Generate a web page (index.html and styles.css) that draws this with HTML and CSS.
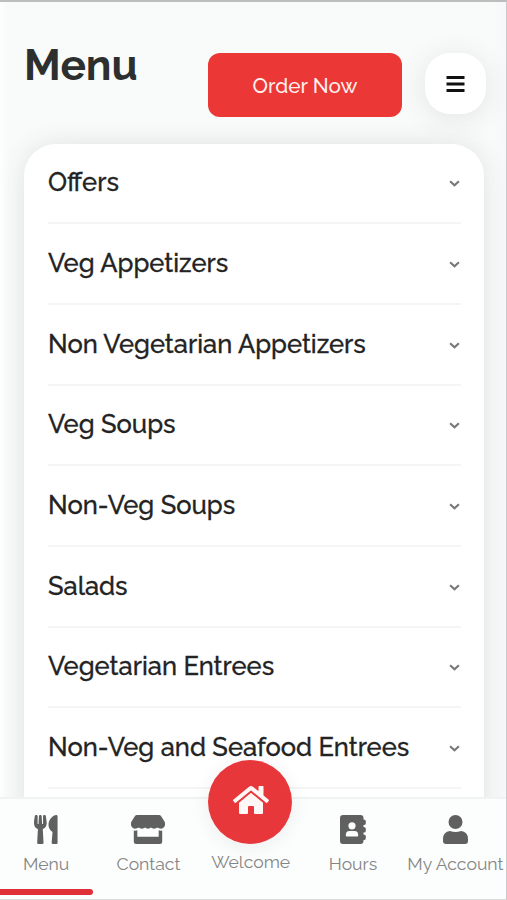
FILE: index.html
```html
<!DOCTYPE html>
<html lang="en">
<head>
<meta charset="utf-8">
<title>Menu</title>
<link rel="stylesheet" href="styles.css">
</head>
<body>
<div class="app">
  <header class="header">
    <h1 class="title">Menu</h1>
    <button class="order">Order Now</button>
    <button class="burger" aria-label="Open navigation"><svg viewBox="0 0 18 18"><path d="M0 2.5h18M0 9h18M0 15.5h18"/></svg></button>
  </header>
  <main class="card">
    <div class="row"><span class="name">Offers</span><svg class="chevron" viewBox="0 0 10 6"><path d="M1 1l4 3.7L9 1"/></svg></div>
    <div class="row"><span class="name">Veg Appetizers</span><svg class="chevron" viewBox="0 0 10 6"><path d="M1 1l4 3.7L9 1"/></svg></div>
    <div class="row"><span class="name">Non Vegetarian Appetizers</span><svg class="chevron" viewBox="0 0 10 6"><path d="M1 1l4 3.7L9 1"/></svg></div>
    <div class="row"><span class="name">Veg Soups</span><svg class="chevron" viewBox="0 0 10 6"><path d="M1 1l4 3.7L9 1"/></svg></div>
    <div class="row"><span class="name">Non-Veg Soups</span><svg class="chevron" viewBox="0 0 10 6"><path d="M1 1l4 3.7L9 1"/></svg></div>
    <div class="row"><span class="name">Salads</span><svg class="chevron" viewBox="0 0 10 6"><path d="M1 1l4 3.7L9 1"/></svg></div>
    <div class="row"><span class="name">Vegetarian Entrees</span><svg class="chevron" viewBox="0 0 10 6"><path d="M1 1l4 3.7L9 1"/></svg></div>
    <div class="row"><span class="name">Non-Veg and Seafood Entrees</span><svg class="chevron" viewBox="0 0 10 6"><path d="M1 1l4 3.7L9 1"/></svg></div>
  </main>
  <nav class="nav">
    <a class="tab active"><svg class="icon" viewBox="0 0 416 512"><path d="M207.9 15.2c.8 4.7 16.1 94.5 16.1 128.8 0 52.3-27.8 89.6-68.9 104.6L168 486.7c.7 13.7-10.2 25.3-24 25.3H80c-13.7 0-24.7-11.5-24-25.3l12.9-238.1C27.7 233.6 0 196.2 0 144 0 109.6 15.3 19.9 16.1 15.2 19.3-5.1 61.4-5.4 64 16.3v141.2c1.3 3.4 15.1 3.2 16 0 1.4-25.3 7.9-139.2 8-141.8 3.3-20.8 44.7-20.8 47.9 0 .2 2.7 6.6 116.5 8 141.8.9 3.2 14.8 3.4 16 0V16.3c2.6-21.6 44.8-21.4 48-1.1zm119.2 285.7l-15 185.1c-1.2 14 9.9 26 23.9 26h56c13.3 0 24-10.7 24-24V24c0-13.2-10.7-24-24-24-82.5 0-221.4 178.5-64.9 300.9z"/></svg><span class="label">Menu</span></a>
    <a class="tab"><svg class="icon" viewBox="0 0 34 29"><path d="M6 0h22q1.400 0 2.200 1.200l3.400 5.600c1.500 3-.2 6.700-3.400 6.900-1.700 0-2.800-.4-3.700-1.100-1.900 1.500-5 1.500-6.500 0-1.600 1.500-4.400 1.500-6 0-1.500 1.500-4.600 1.500-6.500 0-.9.700-2 1.100-3.700 1.100C.6 13.500-1.100 9.800.4 6.800l3.400-5.600Q4.600 0 6 0zM2.800 15.500q1.800.4 3.500-.2v6.400h21.400v-6.400q1.700.6 3.500.2v11q0 2.500-2.500 2.500H5.300q-2.500 0-2.500-2.500z"/></svg><span class="label">Contact</span></a>
    <a class="tab home"><span class="bubble"><svg viewBox="0 0 576 512"><path d="M280.370 148.260L96 300.110V464a16 16 0 0 0 16 16l112.060-.29a16 16 0 0 0 15.920-16V368a16 16 0 0 1 16-16h64a16 16 0 0 1 16 16v95.640a16 16 0 0 0 16 16.050L464 480a16 16 0 0 0 16-16V300L295.670 148.260a12.190 12.190 0 0 0-15.300 0zM571.600 251.470L488 182.560V44.050a12 12 0 0 0-12-12h-56a12 12 0 0 0-12 12v72.610L318.470 43a48 48 0 0 0-61 0L4.340 251.470a12 12 0 0 0-1.600 16.900l25.500 31A12 12 0 0 0 45.150 301l235.220-193.740a12.190 12.190 0 0 1 15.300 0L530.900 301a12 12 0 0 0 16.900-1.600l25.500-31a12 12 0 0 0-1.700-16.930z"/></svg></span><span class="label">Welcome</span></a>
    <a class="tab"><svg class="icon" viewBox="0 0 26 29"><path fill-rule="evenodd" d="M3 0h17.500q3 0 3 3v1.500q2.300 0 2.300 1.500v2.500q0 1.500-2.300 1.500v2q2.300 0 2.300 1.500V16q0 1.500-2.300 1.500v2q2.300 0 2.300 1.500v2.500q0 1.500-2.300 1.500v1q0 3-3 3H3q-3 0-3-3V3q0-3 3-3zm9 7.200a3.600 3.600 0 1 0 0 7.200 3.600 3.600 0 0 0 0-7.200zM9.500 16Q5.800 16 5.800 20v.5q0 1 1 1h10.400q1 0 1-1V20q0-4-3.700-4z"/></svg><span class="label">Hours</span></a>
    <a class="tab"><svg class="icon" viewBox="0 0 25 29"><circle cx="12.500" cy="7" r="7"/><path d="M7 16q5.500 2 11 0 7 .8 7 8v2q0 3-3 3H3q-3 0-3-3v-2q0-7.200 7-8z"/></svg><span class="label">My Account</span></a>
  </nav>
</div>
</body>
</html>
```
FILE: styles.css
```css
* { box-sizing: border-box; }
body { margin: 0; font-family: Raleway, Lato, sans-serif; }
button { border: 0; padding: 0; font-family: inherit; }

.app {
  position: relative;
  width: 507px;
  height: 900px;
  overflow: hidden;
  background: linear-gradient(90deg, #fdfefd 0, #f9fbfa 8px, #f9fbfa 490px, #f7f8f9 100%);
  border-top: 2px solid #bcbebd;
  border-right: 1px solid #c9cacc;
  border-bottom: 1px solid #dadada;
}

.header {
  display: flex;
  align-items: flex-start;
  height: 141.500px;
  padding: 51px 20px 0 24px;
}
.title {
  flex: 1;
  margin: -14px 0 0;
  font-size: 42.500px;
  line-height: 52px;
  font-weight: 700;
  color: #2d2f2f;
}
.order {
  width: 194px;
  height: 64px;
  margin-right: 23px;
  padding-top: 1px;
  border-radius: 12px;
  background: #eb3735;
  color: #fff0ee;
  font-size: 20.700px;
  font-weight: 500;
}
.burger {
  display: grid;
  place-items: center;
  width: 61px;
  height: 61px;
  border-radius: 25px;
  background: #fff;
  box-shadow: 0 4px 28px rgba(50, 65, 60, .12);
}
.burger svg { width: 19px; height: 18px; stroke: #111; stroke-width: 2.900; }

.card {
  width: 460px;
  height: 700px;
  margin-left: 24px;
  padding: 0 23px 0 24px;
  border-radius: 32px 32px 0 0;
  background: #fff;
  box-shadow: 0 0 26px rgba(50, 65, 60, .13);
}
.row {
  display: flex;
  justify-content: space-between;
  align-items: center;
  height: 80.700px;
  padding-bottom: 1px;
  border-bottom: 2px solid #f4f5f5;
}
.name {
  font-size: 25.500px;
  font-weight: 500;
  color: #232323;
  -webkit-text-stroke: .3px #232323;
  white-space: nowrap;
}
.chevron {
  width: 11px;
  height: 7px;
  margin: 3px 1px 0 0;
  fill: none;
  stroke: #777;
  stroke-width: 1.900;
}

.nav {
  position: absolute;
  left: -5px;
  bottom: 0;
  display: grid;
  grid-template-columns: repeat(5, 102.300px);
  height: 102px;
  border-top: 2px solid #f1f3f2;
  background: #fcfdfd;
}
.tab {
  position: relative;
  display: flex;
  flex-direction: column;
  align-items: center;
  padding-top: 16px;
  color: #858585;
}
.icon { height: 29px; fill: #606060; }
.label { margin-top: 9px; font-size: 17.600px; line-height: 22px; white-space: nowrap; }
.active::after {
  content: "";
  position: absolute;
  left: 0;
  bottom: 4px;
  width: 98px;
  height: 6px;
  border-radius: 3px;
  background: #df3038;
}
.home { padding-top: 0; }
.bubble {
  display: grid;
  place-items: center;
  flex: none;
  width: 84px;
  height: 84px;
  margin: -39px 2px 0 0;
  border-radius: 50%;
  background: #e8373a;
  box-shadow: 0 3px 20px rgba(30, 40, 40, .07);
}
.bubble svg { width: 36px; height: 32px; margin: 0 0 5px 2px; fill: #fff8f7; }
.home .label { margin-top: 7px; }
```
